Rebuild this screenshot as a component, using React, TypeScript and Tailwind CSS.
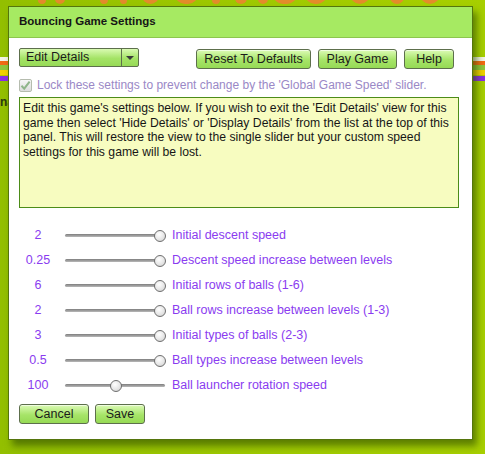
import { useState } from "react";

interface SliderSetting {
  value: string;
  label: string;
  pos: number;
}

const settings: SliderSetting[] = [
  { value: "2", label: "Initial descent speed", pos: 100 },
  { value: "0.25", label: "Descent speed increase between levels", pos: 100 },
  { value: "6", label: "Initial rows of balls (1-6)", pos: 100 },
  { value: "2", label: "Ball rows increase between levels (1-3)", pos: 100 },
  { value: "3", label: "Initial types of balls (2-3)", pos: 100 },
  { value: "0.5", label: "Ball types increase between levels", pos: 100 },
  { value: "100", label: "Ball launcher rotation speed", pos: 50 },
];

// bottoms of the big orange page heading peeking out above the dialog
const blobs = [
  { x: 38, w: 8 }, { x: 55, w: 10 }, { x: 100, w: 8 }, { x: 120, w: 7 },
  { x: 142, w: 17 }, { x: 175, w: 23 }, { x: 212, w: 8 }, { x: 235, w: 12 },
  { x: 258, w: 10 }, { x: 273, w: 24 }, { x: 305, w: 22 }, { x: 350, w: 20 },
  { x: 390, w: 14 }, { x: 420, w: 20 },
];

function GreenButton({ children, className = "" }: { children: React.ReactNode; className?: string }) {
  return (
    <button
      className={`h-[20px] rounded-[3px] border border-[#5d6f4c] bg-[linear-gradient(#dcfbb6,#a6e468_55%,#96da55)] text-[12.5px] leading-none text-[#1b1b1b] shadow-[inset_0_1px_0_rgba(255,255,255,0.6)] ${className}`}
    >
      {children}
    </button>
  );
}

function Slider({ pos }: { pos: number }) {
  // thumb travels across the track, 11px wide
  const left = `calc(${pos}% - ${(pos / 100) * 11}px)`;
  return (
    <div className="relative h-[12px] w-[100px]">
      <div className="absolute left-0 right-0 top-[4px] h-[3px] rounded-full bg-[linear-gradient(#7d7d7d,#b9b9b9)]" />
      <div
        className="absolute top-0 h-[12px] w-[12px] rounded-full border border-[#6f6f6f] bg-[radial-gradient(circle_at_40%_35%,#ffffff,#e4e4e4_60%,#c6c6c6)]"
        style={{ left }}
      />
    </div>
  );
}

export default function App() {
  const [locked] = useState(true);

  return (
    <div className="relative h-[454px] w-[485px] overflow-hidden bg-[linear-gradient(90deg,#93bf00,#a0ca00_60%,#a7cf00)] font-['Liberation_Sans',Arial,sans-serif]">
      {/* page decoration behind the dialog */}
      <div className="absolute left-0 top-0 h-[6px] w-full overflow-hidden">
        {blobs.map((b, i) => (
          <div
            key={i}
            className="absolute top-[-6px] h-[10px] rounded-b-full bg-[#ea8530] opacity-90"
            style={{ left: b.x, width: b.w }}
          />
        ))}
      </div>
      <div className="absolute left-0 right-0 top-[57px] flex flex-col">
        <div className="h-[4px] bg-[#f3f3e6]" />
        <div className="h-[4px] bg-[#f26a14]" />
        <div className="h-[5px] bg-[#8fc63c]" />
        <div className="h-[5px] bg-[#f2d000]" />
        <div className="h-[1px] bg-[#b8c800]" />
        <div className="h-[5px] bg-[#8a2ee6]" />
      </div>
      <div className="absolute left-0 top-[93px] text-[12px] font-bold text-[#2a3a10]">na</div>

      {/* dialog */}
      <div className="relative z-10 ml-[8px] mt-[6px] flex h-[434px] w-[465px] flex-col border border-[#55750c] bg-white shadow-[4px_6px_7px_rgba(45,75,0,0.6)]">
        <div className="flex h-[31px] items-center border-b border-[#8cc64e] bg-[#a6ea62] pl-[10px]">
          <span className="text-[11.5px] font-bold text-[#161616]">Bouncing Game Settings</span>
        </div>

        <div className="flex flex-col pl-[10px]">
          <div className="mt-[10px] flex h-[20px] items-start pr-[18px]">
            <div className="flex h-[19px] w-[120px] rounded-[2px] border border-[#5d6f4c] bg-[linear-gradient(#d9fab2,#a4e366_55%,#97da56)]">
              <span className="flex flex-1 items-center pl-[6px] text-[12.5px] text-[#1b1b1b]">Edit Details</span>
              <span className="flex w-[17px] items-center justify-center border-l border-[#5d6f4c]">
                <span className="h-0 w-0 border-x-[4px] border-t-[4px] border-x-transparent border-t-[#3b3b3b]" />
              </span>
            </div>
            <div className="ml-auto mt-[1px] flex gap-[7px]">
              <GreenButton className="w-[115px]">Reset To Defaults</GreenButton>
              <GreenButton className="w-[79px]">Play Game</GreenButton>
              <GreenButton className="w-[50px]">Help</GreenButton>
            </div>
          </div>

          <div className="mt-[10px] flex h-[14px] items-center">
            <span className="flex h-[13px] w-[13px] items-center justify-center rounded-[2px] border border-[#b5bcae] bg-[linear-gradient(#f6f6f6,#dcdcdc)]">
              {locked && (
                <svg width="11" height="11" viewBox="0 0 11 11">
                  <path d="M1.5 5.8 L4.2 8.6 L9.6 1.6" fill="none" stroke="#8fb58a" strokeWidth="2" />
                </svg>
              )}
            </span>
            <span className="ml-[5px] text-[12px] text-[#9a88c6]">
              Lock these settings to prevent change by the 'Global Game Speed' slider.
            </span>
          </div>

          <div className="mt-[5px] h-[111px] w-[440px] border border-[#4c8c18] bg-[#f7fcc0] px-[3px] pt-[3px] text-[12.2px] leading-[14.7px] text-[#161616]">
            Edit this game's settings below. If you wish to exit the 'Edit Details' view for this game then
            select 'Hide Details' or 'Display Details' from the list at the top of this panel. This will
            restore the view to the single slider but your custom speed settings for this game will be lost.
          </div>

          <div className="mt-[15px] flex flex-col">
            {settings.map((s, i) => (
              <div key={i} className="flex h-[25px] items-center">
                <span className="w-[38px] text-center text-[12.5px] text-[#8a3cf0]">{s.value}</span>
                <div className="ml-[8px]">
                  <Slider pos={s.pos} />
                </div>
                <span className="ml-[7px] text-[12.5px] text-[#8a3cf0]">{s.label}</span>
              </div>
            ))}
          </div>

          <div className="mt-[6px] flex gap-[6px]">
            <GreenButton className="w-[70px]">Cancel</GreenButton>
            <GreenButton className="w-[50px]">Save</GreenButton>
          </div>
        </div>
      </div>
    </div>
  );
}
